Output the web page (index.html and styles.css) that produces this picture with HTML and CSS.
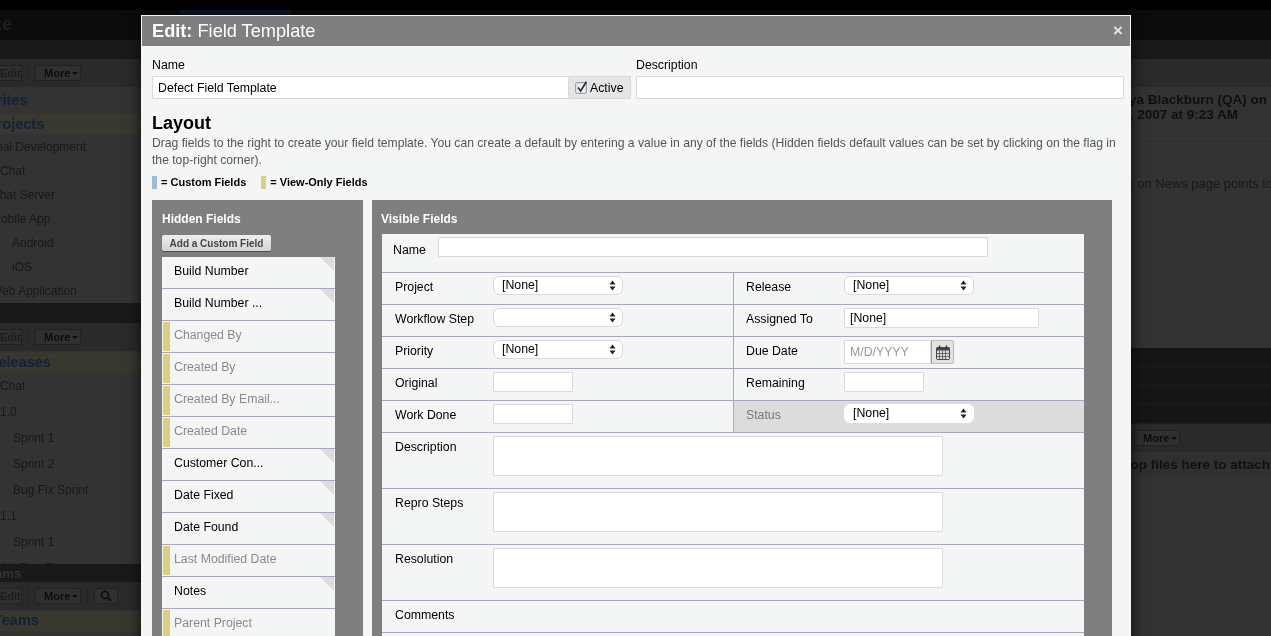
FILE: index.html
```html
<!DOCTYPE html>
<html lang="en">
<head>
<meta charset="utf-8">
<title>Edit: Field Template</title>
<link rel="stylesheet" href="styles.css">
</head>
<body>
<div class="app">
  <div class="topbar"><div class="brand">Size</div><div class="toptab"></div></div>
  <div class="columns">
    <aside class="sidebar">
      <div class="bandhead"></div>
      <div class="toolbar"><span class="tbtn dim">Edit</span><span class="tdiv"></span><span class="tbtn">More<i class="caret"></i></span></div>
      <div class="tree tree-one">
        <div class="sechead fav">Favorites</div>
        <div class="sechead hl proj">Projects</div>
        <div class="node n0">Final Development</div>
        <div class="node n1">Chat</div>
        <div class="node">Chat Server</div>
        <div class="node">Mobile App</div>
        <div class="node n2">Android</div>
        <div class="node n2">iOS</div>
        <div class="node">Web Application</div>
      </div>
      <div class="bandhead b2"></div>
      <div class="toolbar"><span class="tbtn dim">Edit</span><span class="tdiv"></span><span class="tbtn">More<i class="caret"></i></span></div>
      <div class="tree tree-two">
        <div class="sechead hl rel">Releases</div>
        <div class="node n1 tall">Chat</div>
        <div class="node n1 tall">1.0</div>
        <div class="node n3 tall">Sprint 1</div>
        <div class="node n3 tall">Sprint 2</div>
        <div class="node n3 tall">Bug Fix Sprint</div>
        <div class="node n1 tall">1.1</div>
        <div class="node n3 tall">Sprint 1</div>
        <div class="node n1 tall">1.1 Bug Fix</div>
      </div>
      <div class="bandhead b3">Teams</div>
      <div class="toolbar"><span class="tbtn dim">Edit</span><span class="tdiv"></span><span class="tbtn">More<i class="caret"></i></span><span class="tdiv"></span>
        <span class="tbtn search"><svg viewBox="0 0 12 12" width="12" height="12"><circle cx="5" cy="5" r="3.6" fill="none" stroke="#0e0e0e" stroke-width="1.6"/><path d="M7.7 7.7 11 11" stroke="#0e0e0e" stroke-width="1.8"/></svg></span></div>
      <div class="tree"><div class="sechead hl teams">Teams</div></div>
    </aside>
    <main class="detail">
      <div class="bandhead"></div>
      <div class="toolbar t1"><span class="tbtn dim"></span></div>
      <div class="byline"><div class="by1">Freya Blackburn (QA) on</div><div class="by2">May 4, 2007 at 9:23 AM</div></div>
      <p class="bugtext">Link on News page points to</p>
      <div class="rowband"></div><div class="rowband"></div><div class="rowband"></div><div class="rowband"></div>
      <div class="toolbar t2"><span class="tbtn">More<i class="caret"></i></span></div>
      <div class="dropline">Drop files here to attach</div>
    </main>
  </div>
</div>

<div class="modal">
  <header class="modal-head">
    <h1><b>Edit:</b> Field Template</h1>
    <span class="close">×</span>
  </header>
  <div class="modal-body">
    <div class="top-fields">
      <div class="name-col">
        <label class="top-label">Name</label>
        <div class="name-group">
          <input class="name-input" type="text" value="Defect Field Template">
          <span class="active-box">
            <svg class="check" viewBox="0 0 13 13" width="13" height="13"><rect x="0.7" y="1.7" width="10.6" height="10.6" rx="1.5" fill="#eef1f4" stroke="#8b8f95"/><path d="M3 6.5 5.6 10 11.4 0.8" fill="none" stroke="#2b2f36" stroke-width="1.7"/></svg>
            Active
          </span>
        </div>
      </div>
      <div class="desc-col">
        <label class="top-label">Description</label>
        <input class="desc-input" type="text">
      </div>
    </div>
    <h2>Layout</h2>
    <p class="help">Drag fields to the right to create your field template. You can create a default by entering a value in any of the fields (Hidden fields default values can be set by clicking on the flag in the top-right corner).</p>
    <div class="legend">
      <span class="swatch blue"></span><span class="legend-text">= Custom Fields</span>
      <span class="swatch yellow"></span><span class="legend-text">= View-Only Fields</span>
    </div>
    <div class="panels">
      <section class="panel hidden-panel">
        <h3>Hidden Fields</h3>
        <button class="add-btn" type="button">Add a Custom Field</button>
        <ul class="field-list">
          <li class="fitem flag">Build Number</li>
          <li class="fitem flag">Build Number ...</li>
          <li class="fitem ro">Changed By</li>
          <li class="fitem ro">Created By</li>
          <li class="fitem ro">Created By Email...</li>
          <li class="fitem ro">Created Date</li>
          <li class="fitem flag">Customer Con...</li>
          <li class="fitem flag">Date Fixed</li>
          <li class="fitem flag">Date Found</li>
          <li class="fitem ro">Last Modified Date</li>
          <li class="fitem flag">Notes</li>
          <li class="fitem ro">Parent Project</li>
        </ul>
      </section>
      <section class="panel visible-panel">
        <h3>Visible Fields</h3>
        <div class="vtable">
          <div class="vrow name-row"><span class="name-label">Name</span><input class="in name-field" type="text"></div>
          <div class="vrow split">
            <div class="cell"><span class="lbl">Project</span><div class="sel"><span>[None]</span><svg class="updown" viewBox="0 0 7 11" width="7" height="11"><path d="M3.5 0.5 6.5 4.5H.5zM3.5 10.5 .5 6.5H6.5z" fill="#222"/></svg></div></div>
            <div class="cell rc"><span class="lbl">Release</span><div class="sel"><span>[None]</span><svg class="updown" viewBox="0 0 7 11" width="7" height="11"><path d="M3.5 0.5 6.5 4.5H.5zM3.5 10.5 .5 6.5H6.5z" fill="#222"/></svg></div></div>
          </div>
          <div class="vrow split">
            <div class="cell"><span class="lbl">Workflow Step</span><div class="sel"><span></span><svg class="updown" viewBox="0 0 7 11" width="7" height="11"><path d="M3.5 0.5 6.5 4.5H.5zM3.5 10.5 .5 6.5H6.5z" fill="#222"/></svg></div></div>
            <div class="cell rc"><span class="lbl">Assigned To</span><input class="in assigned" type="text" value="[None]"></div>
          </div>
          <div class="vrow split">
            <div class="cell"><span class="lbl">Priority</span><div class="sel"><span>[None]</span><svg class="updown" viewBox="0 0 7 11" width="7" height="11"><path d="M3.5 0.5 6.5 4.5H.5zM3.5 10.5 .5 6.5H6.5z" fill="#222"/></svg></div></div>
            <div class="cell rc"><span class="lbl">Due Date</span><div class="dategroup"><input class="in date" type="text" placeholder="M/D/YYYY"><span class="calbtn"><svg viewBox="0 0 14 15" width="14" height="15"><rect x="0.5" y="2.5" width="13" height="12" rx="1" fill="#d8d8d8" stroke="#444"/><rect x="0.5" y="2.5" width="13" height="3" fill="#444"/><path d="M3.5 5.5v9M6.5 5.5v9M9.5 5.5v9M1 8.5h12M1 11.5h12" stroke="#555" stroke-width=".8"/><path d="M3.5 .5v3M10.5 .5v3" stroke="#333" stroke-width="1.4"/></svg></span></div></div>
          </div>
          <div class="vrow split">
            <div class="cell"><span class="lbl">Original</span><input class="in short" type="text"></div>
            <div class="cell rc"><span class="lbl">Remaining</span><input class="in short" type="text"></div>
          </div>
          <div class="vrow split">
            <div class="cell"><span class="lbl">Work Done</span><input class="in short" type="text"></div>
            <div class="cell rc ro-cell"><span class="lbl">Status</span><div class="sel plain"><span>[None]</span><svg class="updown" viewBox="0 0 7 11" width="7" height="11"><path d="M3.5 0.5 6.5 4.5H.5zM3.5 10.5 .5 6.5H6.5z" fill="#222"/></svg></div></div>
          </div>
          <div class="vrow area"><span class="lbl">Description</span><textarea class="in ta"></textarea></div>
          <div class="vrow area"><span class="lbl">Repro Steps</span><textarea class="in ta"></textarea></div>
          <div class="vrow area"><span class="lbl">Resolution</span><textarea class="in ta"></textarea></div>
          <div class="vrow comments"><span class="lbl">Comments</span></div>
          <div class="vrow comments"></div>
        </div>
      </section>
    </div>
  </div>
</div>
</body>
</html>
```
FILE: styles.css
```css
* { box-sizing: border-box; }
html, body { margin: 0; height: 636px; overflow: hidden; background: #000; }
body { font-family: "Liberation Sans", Arial, sans-serif; font-size: 12.3px; color: #000; position: relative; }

/* dimmed application behind the dialog */
.app { height: 636px; padding-top: 10px; background: #000; overflow: hidden; filter: blur(.35px); }
.topbar { height: 30px; background: #0c0c0c; display: flex; }
.brand { width: 141px; flex: none; font-size: 18px; font-weight: bold; color: #1f1f1f; line-height: 29px; margin-left: -24px; }
.toptab { width: 111px; height: 5px; margin-left: 63px; background: #0c1a2c; }
.columns { display: flex; height: 596px; }
.sidebar { width: 400px; flex: none; margin-left: -9px; overflow: hidden; background: #333; }
.detail { flex: 1; background: #333; overflow: hidden; }
.bandhead { height: 19px; background: #191919; }
.bandhead.b3 { position: relative; height: 18px; color: #333; font-weight: bold; font-size: 13px; line-height: 20px; text-indent: -10px; }
.bandhead.b2 { height: 20px; }
.toolbar { height: 28px; background: #2a2a2a; display: flex; align-items: center; gap: 6px; }
.toolbar.t1 { padding-left: 709px; }
.toolbar.t2 { padding-left: 743px; }
.tbtn { height: 16px; line-height: 14px; border: 1px solid #222; border-radius: 2px; background: #303030; color: #0e0e0e; font-weight: bold; font-size: 11px; padding: 0 6px 0 8px; display: inline-flex; align-items: center; width: 46px; }
.tbtn.dim { width: 31px; color: #1c1c1c; }
.tbtn.search { width: 24px; padding: 0 0 0 5px; }
.tdiv { width: 1px; height: 16px; background: #222; }
.caret { display: inline-block; margin-left: 2px; border: 3px solid transparent; border-top-color: #0e0e0e; border-bottom: 0; }
.tree { background: #333; }
.tree-one { height: 216px; padding-top: 4px; }
.tree-two { height: 213px; padding-top: 2px; overflow: hidden; }
.sechead { height: 23px; line-height: 19px; font-size: 14.5px; font-weight: bold; color: #10233a; text-indent: -4px; }
.sechead.fav { text-indent: -28px; }
.sechead.hl { background: #38382f; height: 20px; margin-bottom: 1px; }
.sechead.proj { line-height: 21px; }
.sechead.rel { text-indent: -3px; }
.sechead.teams { margin-top: 1px; text-indent: 3px; }
.node { height: 24px; line-height: 24px; font-size: 12px; color: #191919; }
.node.n0 { text-indent: -5px; }
.node.n1 { padding-left: 9px; }
.node.n2 { padding-left: 21px; }
.node.n3 { padding-left: 22px; }
.node.tall { height: 26px; }
.byline { height: 55px; padding-top: 5px; font-size: 13.5px; font-weight: bold; color: #0f0f0f; line-height: 15px; text-align: right; white-space: nowrap; border-bottom: 1px solid #2e2e2e; }
.by1 { padding-right: 4px; }
.by2 { padding-right: 33px; }
.bugtext { margin: 0 -2px 0 0; height: 206px; padding-top: 34px; font-size: 13px; color: #191919; white-space: nowrap; line-height: 16px; text-align: right; }
.rowband { height: 19px; background: #161616; border-bottom: 1px solid #1e1e1e; }
.dropline { height: 25px; line-height: 26px; font-size: 13.5px; font-weight: bold; color: #111; background: #303030; padding-right: 1px; text-align: right; white-space: nowrap; }

/* dialog */
.modal { position: absolute; left: 141px; top: 15px; width: 990px; height: 640px; background: #f4f6f6; border: 1px solid #f2f3f3; box-shadow: 0 0 14px rgba(0,0,0,.75); overflow: hidden; filter: blur(.25px); }
.modal-head { height: 30px; background: #7f7f7f; display: flex; align-items: center; justify-content: space-between; padding: 0 7px 0 10px; color: #fff; }
.modal-head h1 { margin: 0; font-size: 18.2px; font-weight: normal; line-height: 27px; }
.modal-head b { font-weight: bold; }
.close { font-size: 17px; font-weight: bold; color: #e4e4e4; line-height: 28px; }
.modal-body { padding: 11px 6px 0 10px; }
.top-fields { display: flex; gap: 5px; }
.top-label { display: block; height: 19px; line-height: 16px; }
.name-group { display: flex; width: 479px; height: 23px; }
.name-input { width: 417px; height: 23px; }
.name-input, .desc-input, .in { border: 1px solid #d9d9d9; background: #fff; font: 12.3px "Liberation Sans", Arial, sans-serif; color: #000; padding: 0 5px; margin: 0; outline: 0; border-radius: 1px; display: block; }
.active-box { flex: 1; background: #e4e5e5; border: 1px solid #d9d9d9; border-left: 0; display: flex; align-items: center; padding-left: 6px; gap: 2px; }
.desc-col { width: 488px; }
.desc-input { width: 488px; height: 23px; }
h2 { margin: 12px 0 0; font-size: 18px; line-height: 24px; font-weight: bold; }
.help { margin: 0; width: 972px; font-size: 12.15px; line-height: 17px; color: #555; }
.legend { display: flex; align-items: center; margin-top: 5px; height: 16px; font-size: 11px; font-weight: bold; }
.swatch { width: 5px; height: 13px; margin-right: 4px; }
.swatch.blue { background: #9dbcdc; }
.swatch.yellow { background: #dcce82; }
.legend-text { margin-right: 15px; }
.panels { display: flex; gap: 9px; margin-top: 10px; }
.panel { background: #7f7f7f; height: 440px; }
.panel h3 { margin: 0; color: #fff; font-size: 12px; line-height: 16px; font-weight: bold; padding-top: 1px; }
.hidden-panel { width: 211px; padding: 10px 28px 0 10px; }
.visible-panel { width: 740px; padding: 10px 28px 0 10px; }
.visible-panel h3 { margin-left: -1px; }
.add-btn { display: block; margin: 8px 0 6px; width: 109px; height: 16px; padding: 0; border: 0; border-radius: 2px; background: linear-gradient(#eee, #d4d4d4); box-shadow: 0 1px 1px rgba(0,0,0,.4); font: bold 10px "Liberation Sans", Arial, sans-serif; color: #444; }
.field-list { margin: 0; padding: 0; list-style: none; }
.fitem { position: relative; height: 32px; background: #f4f6f6; border-bottom: 1px solid #a9a6bd; padding: 7px 0 0 12px; line-height: 15px; overflow: hidden; }
.fitem.flag::after { content: ""; position: absolute; top: 0; right: 1px; border-style: solid; border-width: 0 14px 14px 0; border-color: transparent #dcdcdc transparent transparent; }
.fitem.ro { color: #8a8a8a; }
.fitem.ro::before { content: ""; position: absolute; left: 1px; top: 1px; bottom: 1px; width: 7px; background: #dcce82; }
.vtable { width: 702px; margin-top: 7px; background: #f4f6f6; }
.vrow { border-bottom: 1px solid #a9a6bd; }
.name-row { height: 39px; display: flex; padding: 3px 0 0 11px; }
.name-label { width: 45px; line-height: 26px; }
.name-field { width: 550px; height: 28px; }
.split { height: 32px; display: grid; grid-template-columns: 351px 351px; }
.cell { display: flex; padding: 3px 0 0 13px; height: 31px; }
.cell.rc { border-left: 1px solid #a9a9b5; padding-left: 12px; }
.cell.ro-cell { background: #dcdcdc; color: #777; }
.lbl { width: 98px; flex: none; padding-top: 4px; line-height: 15px; }
.sel { width: 130px; height: 19px; background: #fff; border: 1px solid #d9d9d9; border-radius: 6px; position: relative; padding-left: 8px; line-height: 16px; color: #000; }
.sel.plain { border-color: #fff; }
.updown { position: absolute; right: 6px; top: 3px; }
.in { height: 20px; }
.short { width: 80px; }
.assigned { width: 195px; }
.dategroup { display: flex; }
.in.date { width: 87px; height: 24px; }
.in.date::placeholder { color: #999; opacity: 1; }
.calbtn { width: 23px; height: 24px; background: #e2e2e2; border: 1px solid #bbb; border-left-color: #999; border-radius: 0 3px 3px 0; display: flex; align-items: center; justify-content: center; }
.area { height: 56px; display: flex; padding: 3px 0 0 13px; }
.ta { width: 450px; height: 40px; resize: none; }
.comments { height: 32px; padding: 6px 0 0 13px; }
.comments .lbl { padding-top: 1px; display: block; }
```
